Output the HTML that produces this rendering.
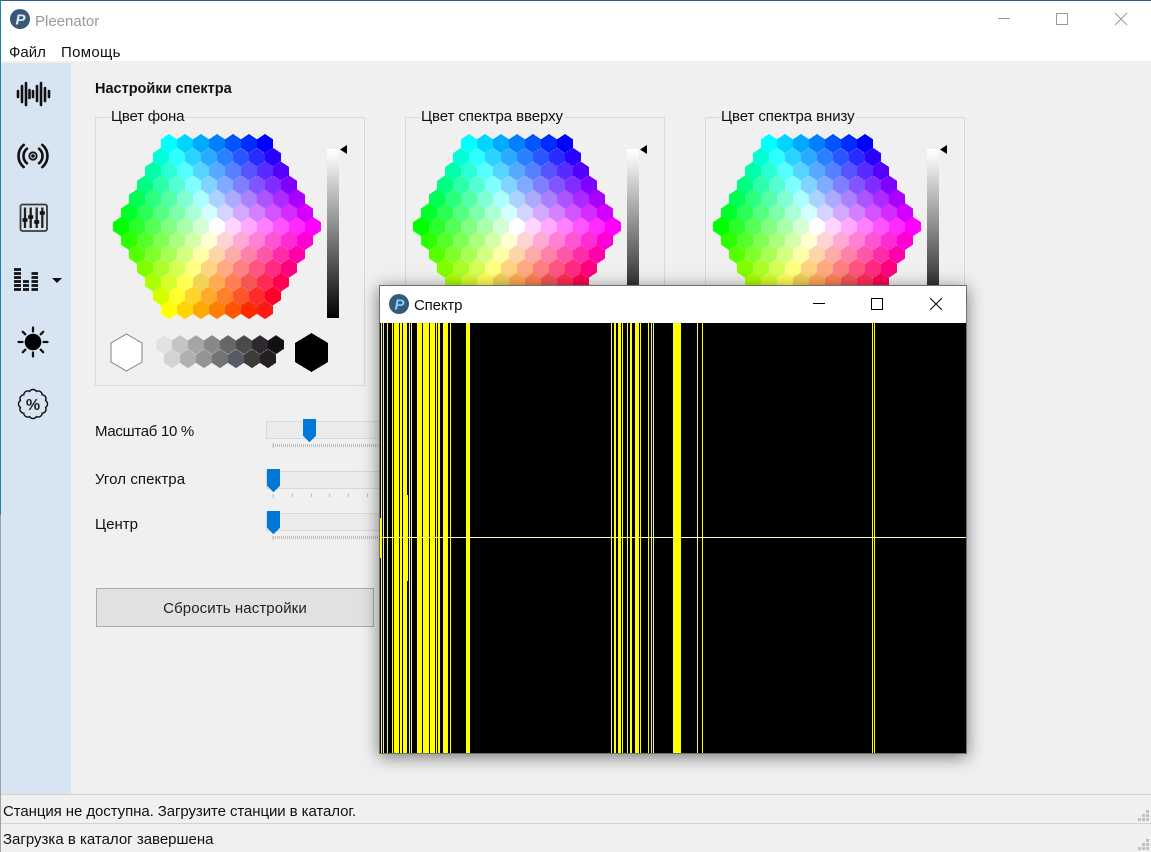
<!DOCTYPE html>
<html><head><meta charset="utf-8"><title>Pleenator</title>
<style>
html,body{margin:0;padding:0;background:#f0f0f0}
#p{position:relative;width:1151px;height:852px;overflow:hidden;background:#f0f0f0;font:15px/20px "Liberation Sans","Noto Sans CJK JP",sans-serif;color:#111}
.t{position:absolute;white-space:nowrap;height:20px}
svg{position:absolute;left:0;top:0}
.gb{position:absolute;border:1px solid #d9d9d9;box-sizing:border-box}
.lb{background:#f0f0f0;padding-right:1px}
#btn{position:absolute;left:96px;top:588px;width:278px;height:39px;box-sizing:border-box;background:#e1e1e1;border:1px solid #adadad;text-align:center;line-height:40px;color:#222;letter-spacing:.1px}
#win{position:absolute;left:379px;top:285px;width:588px;height:469px;box-sizing:border-box;border:1px solid #707070;background:#fff;box-shadow:0 3px 16px rgba(0,0,0,.5)}
#blk{position:absolute;left:0;top:37px;width:586px;height:430px;background:#000;overflow:hidden}
#blk i{position:absolute;top:0;height:430px;background:#ff0}
</style></head><body><div id="p">
<div style="position:absolute;left:0;top:0;width:1151px;height:61px;background:#fff"></div>
<div style="position:absolute;left:1px;top:63px;width:70px;height:731px;background:#d7e4f2"></div>
<div style="position:absolute;left:0;top:0;width:1151px;height:1px;background:#2a5f9e"></div>
<div style="position:absolute;left:0;top:0;width:1px;height:515px;background:#1f7fb0"></div>
<div style="position:absolute;left:0;top:515px;width:1px;height:337px;background:#a0a0a0"></div>
<div style="position:absolute;left:1px;top:794px;width:1150px;height:1px;background:#d2d2d2"></div>
<div style="position:absolute;left:1px;top:823px;width:1150px;height:1px;background:#d2d2d2"></div>

<div class="gb" style="left:95px;top:117px;width:270px;height:269px"></div>
<div class="gb" style="left:405px;top:117px;width:260px;height:269px"></div>
<div class="gb" style="left:705px;top:117px;width:260px;height:269px"></div>

<svg width="1151" height="852" viewBox="0 0 1151 852">
<defs>
<path id="h" d="M0-9.55 8-4.2V4.2L0 9.55-8 4.2V-4.2Z" shape-rendering="crispEdges"/>
<linearGradient id="gr" x1="0" y1="0" x2="0" y2="1"><stop offset="0" stop-color="#fff"/><stop offset=".04" stop-color="#f8f8f8"/><stop offset="1" stop-color="#000"/></linearGradient>
<g id="wheel">
<g transform="translate(217,226.6)">
<g transform="translate(0,-83.1)"><use href="#h" x="-48" fill="#00ffff"/><use href="#h" x="-32" fill="#00d4ff"/><use href="#h" x="-16" fill="#00aaff"/><use href="#h" x="0" fill="#0080ff"/><use href="#h" x="16" fill="#0055ff"/><use href="#h" x="32" fill="#002bff"/><use href="#h" x="48" fill="#0000ff"/></g>
<g transform="translate(0,-69.25)"><use href="#h" x="-56" fill="#00ffd4"/><use href="#h" x="-40" fill="#2bffff"/><use href="#h" x="-24" fill="#2bd4ff"/><use href="#h" x="-8" fill="#2baaff"/><use href="#h" x="8" fill="#2b80ff"/><use href="#h" x="24" fill="#2b55ff"/><use href="#h" x="40" fill="#2b2bff"/><use href="#h" x="56" fill="#2b00ff"/></g>
<g transform="translate(0,-55.4)"><use href="#h" x="-64" fill="#00ffaa"/><use href="#h" x="-48" fill="#2bffd4"/><use href="#h" x="-32" fill="#55ffff"/><use href="#h" x="-16" fill="#55d4ff"/><use href="#h" x="0" fill="#55aaff"/><use href="#h" x="16" fill="#5580ff"/><use href="#h" x="32" fill="#5555ff"/><use href="#h" x="48" fill="#552bff"/><use href="#h" x="64" fill="#5500ff"/></g>
<g transform="translate(0,-41.55)"><use href="#h" x="-72" fill="#00ff80"/><use href="#h" x="-56" fill="#2bffaa"/><use href="#h" x="-40" fill="#55ffd4"/><use href="#h" x="-24" fill="#80ffff"/><use href="#h" x="-8" fill="#80d4ff"/><use href="#h" x="8" fill="#80aaff"/><use href="#h" x="24" fill="#8080ff"/><use href="#h" x="40" fill="#8055ff"/><use href="#h" x="56" fill="#802bff"/><use href="#h" x="72" fill="#8000ff"/></g>
<g transform="translate(0,-27.7)"><use href="#h" x="-80" fill="#00ff55"/><use href="#h" x="-64" fill="#2bff80"/><use href="#h" x="-48" fill="#55ffaa"/><use href="#h" x="-32" fill="#80ffd4"/><use href="#h" x="-16" fill="#aaffff"/><use href="#h" x="0" fill="#aad4ff"/><use href="#h" x="16" fill="#aaaaff"/><use href="#h" x="32" fill="#aa80ff"/><use href="#h" x="48" fill="#aa55ff"/><use href="#h" x="64" fill="#aa2bff"/><use href="#h" x="80" fill="#aa00ff"/></g>
<g transform="translate(0,-13.85)"><use href="#h" x="-88" fill="#00ff2b"/><use href="#h" x="-72" fill="#2bff55"/><use href="#h" x="-56" fill="#55ff80"/><use href="#h" x="-40" fill="#80ffaa"/><use href="#h" x="-24" fill="#aaffd4"/><use href="#h" x="-8" fill="#d4ffff"/><use href="#h" x="8" fill="#d4d4ff"/><use href="#h" x="24" fill="#d4aaff"/><use href="#h" x="40" fill="#d480ff"/><use href="#h" x="56" fill="#d455ff"/><use href="#h" x="72" fill="#d42bff"/><use href="#h" x="88" fill="#d400ff"/></g>
<g><use href="#h" x="-96" fill="#00ff00"/><use href="#h" x="-80" fill="#2bff2b"/><use href="#h" x="-64" fill="#55ff55"/><use href="#h" x="-48" fill="#80ff80"/><use href="#h" x="-32" fill="#aaffaa"/><use href="#h" x="-16" fill="#d4ffd4"/><use href="#h" x="0" fill="#ffffff"/><use href="#h" x="16" fill="#ffd4ff"/><use href="#h" x="32" fill="#ffaaff"/><use href="#h" x="48" fill="#ff80ff"/><use href="#h" x="64" fill="#ff55ff"/><use href="#h" x="80" fill="#ff2bff"/><use href="#h" x="96" fill="#ff00ff"/></g>
<g transform="translate(0,13.85)"><use href="#h" x="-88" fill="#2bff00"/><use href="#h" x="-72" fill="#55ff2b"/><use href="#h" x="-56" fill="#80ff55"/><use href="#h" x="-40" fill="#aaff80"/><use href="#h" x="-24" fill="#d4ffaa"/><use href="#h" x="-8" fill="#ffffd4"/><use href="#h" x="8" fill="#ffd4d4"/><use href="#h" x="24" fill="#ffaad4"/><use href="#h" x="40" fill="#ff80d4"/><use href="#h" x="56" fill="#ff55d4"/><use href="#h" x="72" fill="#ff2bd4"/><use href="#h" x="88" fill="#ff00d4"/></g>
<g transform="translate(0,27.7)"><use href="#h" x="-80" fill="#55ff00"/><use href="#h" x="-64" fill="#80ff2b"/><use href="#h" x="-48" fill="#aaff55"/><use href="#h" x="-32" fill="#d4ff80"/><use href="#h" x="-16" fill="#ffffaa"/><use href="#h" x="0" fill="#ffd4aa"/><use href="#h" x="16" fill="#ffaaaa"/><use href="#h" x="32" fill="#ff80aa"/><use href="#h" x="48" fill="#ff55aa"/><use href="#h" x="64" fill="#ff2baa"/><use href="#h" x="80" fill="#ff00aa"/></g>
<g transform="translate(0,41.55)"><use href="#h" x="-72" fill="#80ff00"/><use href="#h" x="-56" fill="#aaff2b"/><use href="#h" x="-40" fill="#d4ff55"/><use href="#h" x="-24" fill="#ffff80"/><use href="#h" x="-8" fill="#ffd480"/><use href="#h" x="8" fill="#ffaa80"/><use href="#h" x="24" fill="#ff8080"/><use href="#h" x="40" fill="#ff5580"/><use href="#h" x="56" fill="#ff2b80"/><use href="#h" x="72" fill="#ff0080"/></g>
<g transform="translate(0,55.4)"><use href="#h" x="-64" fill="#aaff00"/><use href="#h" x="-48" fill="#d4ff2b"/><use href="#h" x="-32" fill="#ffff55"/><use href="#h" x="-16" fill="#f2d455"/><use href="#h" x="0" fill="#ffaa55"/><use href="#h" x="16" fill="#ff8055"/><use href="#h" x="32" fill="#f55555"/><use href="#h" x="48" fill="#ff2b55"/><use href="#h" x="64" fill="#ff0055"/></g>
<g transform="translate(0,69.25)"><use href="#h" x="-56" fill="#d4ff00"/><use href="#h" x="-40" fill="#ffff2b"/><use href="#h" x="-24" fill="#ffd42b"/><use href="#h" x="-8" fill="#ffaa2b"/><use href="#h" x="8" fill="#ff802b"/><use href="#h" x="24" fill="#ff552b"/><use href="#h" x="40" fill="#ff2b2b"/><use href="#h" x="56" fill="#ff002b"/></g>
<g transform="translate(0,83.1)"><use href="#h" x="-48" fill="#ffff00"/><use href="#h" x="-32" fill="#ffd400"/><use href="#h" x="-16" fill="#ffaa00"/><use href="#h" x="0" fill="#ff8000"/><use href="#h" x="16" fill="#ff5500"/><use href="#h" x="32" fill="#ff2b00"/><use href="#h" x="48" fill="#ff1a1a"/></g>
</g>
<rect x="327" y="149" width="12" height="169" fill="url(#gr)"/>
<path d="M340 149.5 347 145V154Z" fill="#000"/>
<path d="M126.5 334 142 343V362L126.5 371 111 362V343Z" fill="#fff" stroke="#808080" stroke-width="1"/>
<path d="M311.5 333 328 343V362L311.5 372 295 362V343Z" fill="#000" shape-rendering="crispEdges"/>
<g transform="translate(0,344.7)"><use href="#h" x="164" fill="#e2e2e2"/><use href="#h" x="180" fill="#c3c4c3"/><use href="#h" x="196" fill="#a5a5a5"/><use href="#h" x="212" fill="#888888"/><use href="#h" x="228" fill="#666666"/><use href="#h" x="244" fill="#4a4a4a"/><use href="#h" x="260" fill="#2d282d"/><use href="#h" x="276" fill="#111111"/></g>
<g transform="translate(0,358.7)"><use href="#h" x="172" fill="#d2d3d2"/><use href="#h" x="188" fill="#b0b0b0"/><use href="#h" x="204" fill="#929592"/><use href="#h" x="220" fill="#747474"/><use href="#h" x="236" fill="#595b64"/><use href="#h" x="252" fill="#3c3c3c"/><use href="#h" x="268" fill="#242020"/></g>
</g>
</defs>
<use href="#wheel"/>
<use href="#wheel" x="300"/>
<use href="#wheel" x="600"/>

<!-- title bar -->
<circle cx="20" cy="19" r="10" fill="#3a5778"/>
<text x="20.5" y="24.5" text-anchor="middle" font-family="Liberation Sans" font-weight="bold" font-style="italic" font-size="15" fill="#d5eef5">P</text>
<path d="M998 18.5H1010" stroke="#999" fill="none"/>
<rect x="1056.5" y="13.5" width="11" height="11" fill="none" stroke="#999"/>
<path d="M1115 13 1127 25M1127 13 1115 25" stroke="#999" fill="none"/>

<!-- sidebar icons -->
<g stroke="#111" fill="none" stroke-width="2.6" stroke-linecap="round">
<path d="M18 91V97M22 86V102M26 83V105M29.500 90V98M33 91V97M37 86V101M41 83V105M45 88V101M49 91V97"/>
<path d="M42.300 144.900A14.500 14.500 0 0 1 42.300 167.100M23.700 144.900A14.500 14.500 0 0 0 23.700 167.100M39.100 148.700A9.500 9.500 0 0 1 39.100 163.300M26.900 148.700A9.500 9.500 0 0 0 26.900 163.300"/>
<circle cx="33" cy="156" r="3.700" stroke-width="1.800"/>
<path d="M18.500 342H22.500M43.500 342H47.500M33 327.500V331.500M33 352.500V356.500M22.800 331.800 25.300 334.300M40.700 349.700 43.200 352.200M43.200 331.800 40.700 334.300M25.300 349.700 22.800 352.200" stroke-width="2.300"/>
</g>
<circle cx="33" cy="156" r="1.800" fill="#111"/>
<circle cx="33" cy="342" r="8.300" fill="#000"/>
<rect x="20.500" y="204.500" width="26.500" height="26.500" rx="2" fill="none" stroke="#3a3a3a" stroke-width="1.800"/>
<path d="M25 207.500V228M30.700 207.500V228M36.700 207.500V228M42.300 207.500V228" stroke="#222" stroke-width="2.300" fill="none"/>
<path d="M22.500 220H27.500M28.200 217H33.200M34.200 222H39.200M39.800 213H44.800" stroke="#111" stroke-width="3.400" fill="none"/>
<path d="M14 269.500H21M14 273.500H21M14 277.500H21M14 281.500H21M14 285.500H21M14 289.500H21M23 281.500H29M23 285.500H29M23 289.500H29M31.500 273.500H38M31.500 277.500H38M31.500 281.500H38M31.500 285.500H38M31.500 289.500H38" stroke="#111" stroke-width="2.700" fill="none"/>
<path d="M52 278H62L57 283Z" fill="#111"/>
<path transform="translate(33,404)" d="M12.600 3.400A4 4 0 0 1 9.200 9.200 4 4 0 0 1 3.400 12.600 4 4 0 0 1-3.400 12.600 4 4 0 0 1-9.200 9.200 4 4 0 0 1-12.600 3.400 4 4 0 0 1-12.600-3.400 4 4 0 0 1-9.200-9.200 4 4 0 0 1-3.400-12.600 4 4 0 0 1 3.400-12.600 4 4 0 0 1 9.200-9.200 4 4 0 0 1 12.600-3.400 4 4 0 0 1 12.600 3.400Z" fill="none" stroke="#111" stroke-width="1.400"/>
<text x="33" y="410" text-anchor="middle" font-family="Liberation Sans" font-weight="bold" font-size="16" fill="#222">%</text>

<!-- sliders -->
<g fill="#ececec" stroke="#d9d9d9"><rect x="266.500" y="421.500" width="120" height="17"/><rect x="266.500" y="471.500" width="120" height="17"/><rect x="266.500" y="513.500" width="120" height="17"/></g>
<g stroke="#bdbdbd" fill="none">
<path d="M273 443V448" />
<path d="M273 445.500H385" stroke-width="3" stroke-dasharray="1 1"/>
<path d="M273 494V498M292.500 494V497M311.500 494V497M329.500 494V497M348.500 494V497M367.500 494V497"/>
<path d="M273 536V540"/>
<path d="M273 537.500H385" stroke-width="3" stroke-dasharray="1 1"/>
</g>
<g fill="#0078d7" shape-rendering="crispEdges">
<path d="M303 419H316V436L309.500 442 303 436Z"/>
<path d="M267 469H280V486L273.500 492 267 486Z"/>
<path d="M267 511H280V528L273.500 534 267 528Z"/>
</g>
<!-- grips -->
<g fill="#c0c0c0"><rect x="1146" y="810" width="3" height="3"/><rect x="1142" y="814" width="3" height="3"/><rect x="1146" y="814" width="3" height="3"/><rect x="1138" y="818" width="3" height="3"/><rect x="1142" y="818" width="3" height="3"/><rect x="1146" y="818" width="3" height="3"/><rect x="1146" y="839" width="3" height="3"/><rect x="1142" y="843" width="3" height="3"/><rect x="1146" y="843" width="3" height="3"/><rect x="1138" y="847" width="3" height="3"/><rect x="1142" y="847" width="3" height="3"/><rect x="1146" y="847" width="3" height="3"/></g>
</svg>

<div class="t" style="left:35px;top:12px;color:#999">Pleenator</div>
<div class="t" style="left:9px;top:43px">Файл</div>
<div class="t" style="left:61px;top:43px;letter-spacing:.3px">Помощь</div>
<div class="t" style="left:95px;top:79px;font-weight:bold;font-size:14.5px">Настройки спектра</div>
<div class="t lb" style="left:111px;top:109px;letter-spacing:-.2px;height:15px;line-height:16px">Цвет фона</div>
<div class="t lb" style="left:421px;top:109px;letter-spacing:-.08px;height:15px;line-height:16px">Цвет спектра вверху</div>
<div class="t lb" style="left:721px;top:109px;letter-spacing:-.08px;height:15px;line-height:16px">Цвет спектра внизу</div>
<div class="t" style="left:95px;top:422px;letter-spacing:-.3px">Масштаб 10 %</div>
<div class="t" style="left:95px;top:470px;letter-spacing:.08px">Угол спектра</div>
<div class="t" style="left:95px;top:515px">Центр</div>
<div id="btn">Сбросить настройки</div>
<div class="t" style="left:3px;top:802px;letter-spacing:-.08px">Станция не доступна. Загрузите станции в каталог.</div>
<div class="t" style="left:3px;top:830px">Загрузка в каталог завершена</div>

<div id="win">
<svg width="586" height="37" viewBox="380 286 586 37">
<circle cx="399" cy="304" r="10" fill="#3a5778"/>
<text x="399.500" y="309.500" text-anchor="middle" font-family="Liberation Sans" font-weight="bold" font-style="italic" font-size="15" fill="#6fdcf0">P</text>
<path d="M813 303.500H825" stroke="#000" fill="none"/>
<rect x="871.500" y="298.500" width="11" height="11" fill="none" stroke="#000"/>
<path d="M930 298 942 310M942 298 930 310" stroke="#000" fill="none"/>
</svg>
<div class="t" style="left:34px;top:10px;letter-spacing:-.15px">Спектр</div>
<div id="blk">
<i style="left:1px;width:1px"></i><i style="left:3px;width:1px"></i><i style="left:7px;width:1px"></i><i style="left:12px;width:1px"></i><i style="left:14px;width:5px"></i><i style="left:20px;width:2px"></i><i style="left:23px;width:4px"></i><i style="left:27px;width:1px;top:172px;height:86px"></i><i style="left:29px;width:1px"></i><i style="left:31px;width:1px"></i><i style="left:37px;width:5px"></i><i style="left:43px;width:5px"></i><i style="left:48px;width:1px"></i><i style="left:50px;width:5px"></i><i style="left:56px;width:1px"></i><i style="left:58px;width:2px"></i><i style="left:63px;width:5px"></i><i style="left:70px;width:1px"></i><i style="left:86px;width:4px"></i>
<i style="left:231px;width:1px"></i><i style="left:234px;width:2px"></i><i style="left:238px;width:3px"></i><i style="left:242px;width:1px"></i><i style="left:247px;width:1px"></i><i style="left:250px;width:2px"></i><i style="left:255px;width:4px"></i><i style="left:260px;width:1px"></i><i style="left:268px;width:1px"></i><i style="left:271px;width:1px"></i><i style="left:273px;width:1px"></i><i style="left:293px;width:8px"></i><i style="left:317px;width:1px"></i><i style="left:322px;width:1px"></i><i style="left:492px;width:1px"></i><i style="left:494px;width:1px"></i>
<i style="left:0;width:1px;top:195px;height:40px"></i>
<i style="left:0;top:214px;width:586px;height:1px;background:#ffffa8"></i>
</div>
</div>
</div></body></html>
